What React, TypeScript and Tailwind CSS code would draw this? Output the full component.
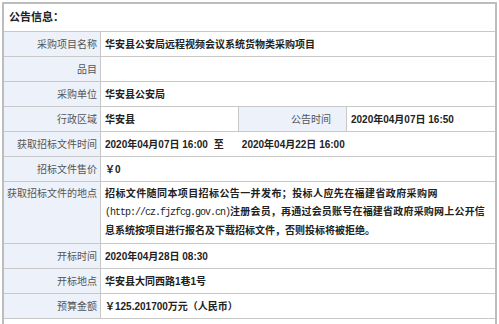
import React from "react";

const font = "font-['Liberation_Sans','Noto_Sans_CJK_SC',sans-serif]";

function Label({ children, top = false }: { children?: React.ReactNode; top?: boolean }) {
  return (
    <div
      className={`w-[97px] shrink-0 bg-[#edf1fa] border-r border-[#c8c8c8] text-[#555] text-right pr-[3px] flex ${
        top ? "items-start pt-[3px] leading-[18px]" : "items-center justify-end"
      }`}
    >
      <span className="w-full">{children}</span>
    </div>
  );
}

function Value({ children, className = "" }: { children?: React.ReactNode; className?: string }) {
  return (
    <div className={`flex-1 pl-[4px] font-bold text-[#222] flex items-center ${className}`}>{children}</div>
  );
}

function Row({ label, children }: { label: string; children?: React.ReactNode }) {
  return (
    <div className="flex h-[25px] border-b border-[#c8c8c8]">
      <Label>{label}</Label>
      <Value>{children}</Value>
    </div>
  );
}

export default function App() {
  return (
    <div className={`w-[499px] h-[324px] overflow-hidden bg-white ${font} text-[10px]`}>
      <div className="ml-[2px] mt-[2px] w-[495px] border-2 border-[#bdbdbd]">
        <div className="h-[28px] border-b border-[#c8c8c8] flex items-center pl-[5px] font-bold text-[11px] text-[#222]">
          公告信息：
        </div>
        <Row label="采购项目名称">华安县公安局远程视频会议系统货物类采购项目</Row>
        <Row label="品目" />
        <Row label="采购单位">华安县公安局</Row>
        <div className="flex h-[25px] border-b border-[#c8c8c8]">
          <Label>行政区域</Label>
          <div className="w-[138px] shrink-0 border-r border-[#c8c8c8] pl-[4px] font-bold text-[#222] flex items-center">
            华安县
          </div>
          <div className="w-[108px] shrink-0 bg-[#edf1fa] border-r border-[#c8c8c8] text-[#555] flex items-center justify-end pr-[15px]">
            公告时间
          </div>
          <Value className="pl-[2px]">2020年04月07日 16:50</Value>
        </div>
        <Row label="获取招标文件时间">
          <span>2020年04月07日 16:00</span>
          <span className="ml-[6px] mr-[18px]">至</span>
          <span>2020年04月22日 16:00</span>
        </Row>
        <Row label="招标文件售价">￥0</Row>
        <div className="flex border-b border-[#c8c8c8]">
          <Label top>获取招标文件的地点</Label>
          <div className="flex-1 pl-[4px] pr-[2px] py-[3px] leading-[18px] font-bold text-[#222]">
            <span className="tracking-[0.4px]">招标文件随同本项目招标公告一并发布；投标人应先在福建省政府采购网</span>
            <br />
            <span className="font-['Liberation_Mono',monospace] tracking-[-1px] font-normal">(http://cz.fjzfcg.gov.cn)</span>
            <span className="tracking-[0.2px]">注册会员，再通过会员账号在福建省政府采购网上公开信</span>
            <br />
            息系统按项目进行报名及下载招标文件，否则投标将被拒绝。
          </div>
        </div>
        <Row label="开标时间">2020年04月28日 08:30</Row>
        <Row label="开标地点">华安县大同西路1巷1号</Row>
        <Row label="预算金额">￥125.201700万元（人民币）</Row>
        <div className="h-[30px]" />
      </div>
    </div>
  );
}
